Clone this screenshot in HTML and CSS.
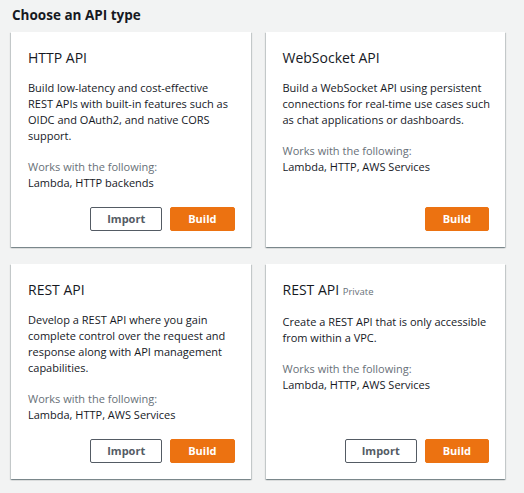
FILE: index.html
```html
<!DOCTYPE html>
<html lang="en">
<head>
<meta charset="utf-8">
<title>Choose an API type</title>
<link rel="stylesheet" href="styles.css">
</head>
<body>
<main class="page">
  <h2 class="page-title">Choose an API type</h2>
  <div class="grid">
    <section class="card">
      <h3 class="card-title">HTTP API</h3>
      <p class="card-desc">Build low-latency and cost-effective<br>REST APIs with built-in features such as<br>OIDC and OAuth2, and native CORS<br>support.</p>
      <div class="works">
        <div class="works-label">Works with the following:</div>
        <div class="works-list">Lambda, HTTP backends</div>
      </div>
      <div class="actions">
        <button class="btn btn-normal">Import</button>
        <button class="btn btn-primary">Build</button>
      </div>
    </section>
    <section class="card">
      <h3 class="card-title">WebSocket API</h3>
      <p class="card-desc">Build a WebSocket API using persistent<br>connections for real-time use cases such<br>as chat applications or dashboards.</p>
      <div class="works">
        <div class="works-label">Works with the following:</div>
        <div class="works-list">Lambda, HTTP, AWS Services</div>
      </div>
      <div class="actions">
        <button class="btn btn-primary">Build</button>
      </div>
    </section>
    <section class="card">
      <h3 class="card-title">REST API</h3>
      <p class="card-desc">Develop a REST API where you gain<br>complete control over the request and<br>response along with API management<br>capabilities.</p>
      <div class="works">
        <div class="works-label">Works with the following:</div>
        <div class="works-list">Lambda, HTTP, AWS Services</div>
      </div>
      <div class="actions">
        <button class="btn btn-normal">Import</button>
        <button class="btn btn-primary">Build</button>
      </div>
    </section>
    <section class="card">
      <h3 class="card-title">REST API <span class="card-tag">Private</span></h3>
      <p class="card-desc">Create a REST API that is only accessible<br>from within a VPC.</p>
      <div class="works">
        <div class="works-label">Works with the following:</div>
        <div class="works-list">Lambda, HTTP, AWS Services</div>
      </div>
      <div class="actions">
        <button class="btn btn-normal">Import</button>
        <button class="btn btn-primary">Build</button>
      </div>
    </section>
  </div>
</main>
</body>
</html>
```
FILE: styles.css
```css
html, body {
  margin: 0;
  padding: 0;
  background: #f2f3f3;
}
body {
  font-family: "Open Sans", "Noto Sans", Arial, sans-serif;
  color: #16191f;
}
.page {
  padding: 6px 19px 12px 11px;
}
.page-title {
  margin: 0 0 8px 1px;
  font-size: 13.5px;
  line-height: 18px;
  font-weight: 700;
  color: #16191f;
}
.grid {
  display: grid;
  grid-template-columns: 1fr 1fr;
  column-gap: 15px;
  row-gap: 17px;
}
.card {
  display: flex;
  flex-direction: column;
  background: #ffffff;
  padding: 16px 16px 16px 17px;
  box-shadow: 0 1px 1px 0 rgba(0, 28, 36, 0.3), 1px 1px 1px 0 rgba(0, 28, 36, 0.15), -1px 1px 1px 0 rgba(0, 28, 36, 0.15);
}
.card-title {
  margin: 0;
  font-size: 14px;
  line-height: 20px;
  font-weight: 400;
  color: #16191f;
}
.card-tag {
  font-size: 9.5px;
  color: #687078;
}
.card-desc {
  margin: 12px -8px 0 0;
  font-size: 11px;
  line-height: 16px;
  color: #16191f;
}
.works {
  margin-top: 15px;
  font-size: 11px;
  line-height: 16px;
}
.works-label {
  color: #687078;
}
.works-list {
  color: #16191f;
}
.actions {
  margin-top: auto;
  padding-top: 16px;
  display: flex;
  justify-content: flex-end;
  gap: 8px;
}
.btn {
  height: 24px;
  padding: 0 16px;
  border-radius: 2px;
  font-family: "Open Sans", "Noto Sans", Arial, sans-serif;
  font-size: 11px;
  font-weight: 700;
  line-height: 22px;
  cursor: pointer;
}
.btn-normal {
  background: #ffffff;
  border: 1px solid #545b64;
  color: #545b64;
}
.btn-primary {
  background: #ec7211;
  border: 1px solid #ec7211;
  color: #ffffff;
  padding: 0 17px;
}
```
